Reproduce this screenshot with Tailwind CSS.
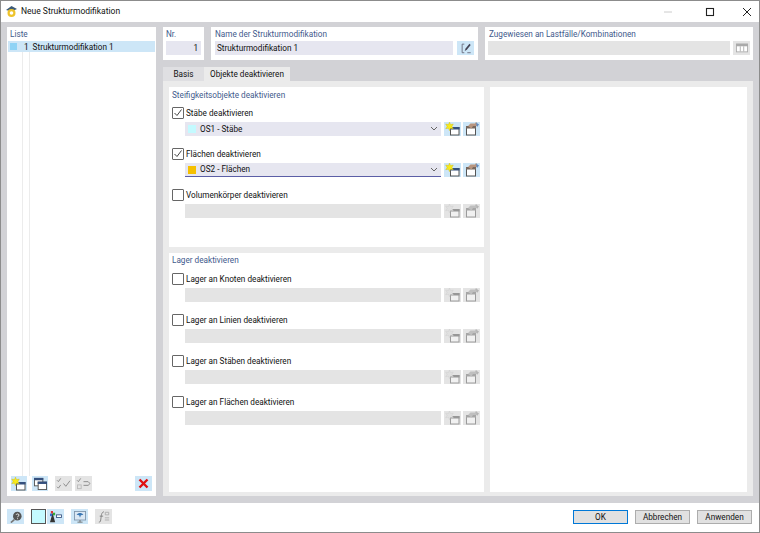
<!DOCTYPE html>
<html lang="de">
<head>
  <meta charset="UTF-8" />
  <title>Neue Strukturmodifikation</title>
  <script src="https://cdn.jsdelivr.net/npm/@tailwindcss/browser@4"></script>
</head>
<body class="m-0 overflow-hidden">
  <svg width="0" height="0" class="absolute">
    <defs>
      <symbol id="i-new" viewBox="0 0 16 14">
        <rect x="5.500" y="5.500" width="8.500" height="7.500" fill="#fff" stroke="#555"/>
        <rect x="5" y="5" width="9.500" height="2.500" fill="#34507e"/>
        <path d="M4.500 0l1 2.600 2.800-.6-1.400 2.400 1.400 2.300-2.800-.5-1 2.600-1-2.600-2.800.5 1.400-2.300L.7 2l2.800.6z" fill="#f7ea1c" stroke="#c9b81a" stroke-width=".4"/>
      </symbol>
      <symbol id="i-copy" viewBox="0 0 16 14">
        <rect x="2.500" y="4.500" width="9" height="8.500" fill="#fff" stroke="#555"/>
        <rect x="2" y="4" width="10" height="2.500" fill="#77685e"/>
        <path d="M4 4l2.500-2.500H11L12 0l1 1 .5 3H9L7.500 6.500z" fill="#b8957f"/>
        <path d="M12 .5l3 2-2 2.500z" fill="#5e8cc4"/>
      </symbol>
      <symbol id="i-windows" viewBox="0 0 16 14">
        <rect x="1.500" y="1.500" width="9" height="8" fill="#fff" stroke="#555"/>
        <rect x="1" y="1" width="10" height="2.500" fill="#34507e"/>
        <rect x="5.500" y="5.500" width="9" height="8" fill="#fff" stroke="#555"/>
        <rect x="5" y="5" width="10" height="2.500" fill="#34507e"/>
      </symbol>
      <symbol id="i-check" viewBox="0 0 16 14">
        <path d="M1 3.500l1.500 1.500 2.500-3.500M1 10.500L2.500 12 5 8.500M8 7l2.500 3L15 4" fill="none" stroke="#888"/>
      </symbol>
      <symbol id="i-uncheck" viewBox="0 0 16 14">
        <rect x="1.500" y="8.500" width="4" height="4" fill="none" stroke="#bbb"/>
        <path d="M1 3.500l1.500 1.500 2.500-3.500M8 5h5l2 2-2 2H8" fill="none" stroke="#888"/>
      </symbol>
      <symbol id="i-search" viewBox="0 0 16 14">
        <circle cx="9.500" cy="6" r="5" fill="#555"/>
        <path d="M6 10l-4 3.500" stroke="#777" stroke-width="2"/>
        <path d="M8 4.500c.5-1.500 3.500-1.500 3.500.3 0 1.200-1.700 1.200-1.700 2.500M9.800 8.500v1" stroke="#fff" fill="none"/>
      </symbol>
      <symbol id="i-tree" viewBox="0 0 16 14">
        <path d="M4 2l3 11H1z" fill="#333"/>
        <rect x="2" y="0" width="2.500" height="3" fill="#d33"/>
        <rect x="4.500" y="2" width="2.500" height="3" fill="#3a3"/>
        <rect x="1" y="3" width="2.500" height="3" fill="#36c"/>
        <rect x="8.500" y="4.500" width="6" height="3" fill="#fff" stroke="#34507e"/>
      </symbol>
      <symbol id="i-monitor" viewBox="0 0 16 14">
        <rect x="1.500" y=".5" width="13" height="10" fill="#dbe8f4" stroke="#7d93aa"/>
        <path d="M5 13h6M8 10.500V13" stroke="#666"/>
        <path d="M4 4.500c2-3 6-3 8 0l-3 .5-1 3-1-3z" fill="#3b78b5"/>
      </symbol>
      <symbol id="i-formula" viewBox="0 0 16 14">
        <path d="M2 13c2 0 2-1 2.500-5s1-7 3.500-7" fill="none" stroke="#777"/>
        <path d="M3 6h4" stroke="#777"/>
        <path d="M9.500 1.500h4v3h-4zM9 8h5M9 10.500h5" fill="none" stroke="#aaa"/>
      </symbol>
      <symbol id="i-edit" viewBox="0 0 16 14">
        <path d="M6 2.500H3.500v10H6" fill="none" stroke="#667"/>
        <path d="M6.500 10.500l1-3L12 2l1.500 1.500-4.500 5.500z" fill="#445"/>
        <path d="M9.500 12.500h4" stroke="#667"/>
      </symbol>
      <symbol id="i-table" viewBox="0 0 16 14">
        <rect x="1.500" y="2.500" width="13" height="9" fill="#fff" stroke="#aaa"/>
        <rect x="1" y="2" width="14" height="3" fill="#aaa"/>
        <path d="M6 5v6M10 5v6" stroke="#aaa"/>
      </symbol>
    </defs>
  </svg>

  <div class="w-[760px] h-[533px] flex flex-col border border-[#8c8c8c] bg-[#d2d2d6] text-[8.2px] leading-none text-[#111] font-[450] font-['Roboto',sans-serif]">
    <!-- title bar -->
    <div class="h-[21px] shrink-0 bg-white flex items-center pl-[4px]">
      <svg width="13" height="13" viewBox="0 0 13 13">
        <path d="M1 5l5.500-4L12 4 6.500 6.500z" fill="#3c5a78"/>
        <circle cx="6.500" cy="8" r="4" fill="#eec32b"/>
        <circle cx="6.500" cy="8" r="1.800" fill="#fff"/>
      </svg>
      <span class="ml-[3px] text-[8.500px]">Neue Strukturmodifikation</span>
      <div class="ml-auto flex items-center">
        <svg width="10" height="10" viewBox="0 0 10 10" class="mr-[32px]"><path d="M1 5h8" stroke="#ccc"/></svg>
        <svg width="10" height="10" viewBox="0 0 10 10" class="mr-[27px]"><rect x="1.500" y="1.500" width="7" height="7" fill="none" stroke="#222" stroke-width="1.100"/></svg>
        <svg width="10" height="10" viewBox="0 0 10 10" class="mr-[7px]"><path d="M1 1l8 8M9 1l-8 8" stroke="#222"/></svg>
      </div>
    </div>

    <div class="flex-1 flex gap-[7px] px-[6px] pt-[5px] pb-[7px] min-h-0">
      <!-- list -->
      <div class="w-[149px] bg-white flex flex-col">
        <div class="h-[14px] flex items-center pl-[3px] text-[#3f5a8c]">Liste</div>
        <div class="h-[11px] mx-[1px] bg-[#cde6f7] flex items-center">
          <span class="ml-[2px] w-[7px] h-[7px] bg-[#8fd3f5]"></span>
          <span class="ml-[7px] pt-[1px]">1</span>
          <span class="ml-[4px] pt-[1px]">Strukturmodifikation 1</span>
        </div>
        <div class="flex-1 flex pl-[15px]">
          <div class="w-[8px] border-x border-[#ececec]"></div>
        </div>
        <div class="h-[20px] flex items-start pl-[4px] pr-[4px] gap-[5px]">
          <button class="w-[16px] h-[15px] bg-[#cde6f7] flex items-center justify-center"><svg width="16" height="14"><use href="#i-new"/></svg></button>
          <button class="w-[16px] h-[15px] bg-[#cde6f7] flex items-center justify-center"><svg width="15" height="13"><use href="#i-windows"/></svg></button>
          <button class="ml-[2px] w-[17px] h-[15px] bg-[#e4e4e4] flex items-center justify-center"><svg width="15" height="13"><use href="#i-check"/></svg></button>
          <button class="-ml-[2px] w-[17px] h-[15px] bg-[#e4e4e4] flex items-center justify-center"><svg width="15" height="13"><use href="#i-uncheck"/></svg></button>
          <button class="ml-auto w-[17px] h-[15px] bg-[#cde6f7] flex items-center justify-center">
            <svg width="11" height="11" viewBox="0 0 11 11"><path d="M1.500 1.500l8 8M9.500 1.500l-8 8" stroke="#e01010" stroke-width="2.400"/></svg>
          </button>
        </div>
      </div>

      <!-- right side -->
      <div class="flex-1 flex flex-col min-w-0">
        <div class="h-[33px] flex gap-[7px] shrink-0">
          <div class="w-[41px] bg-white px-[3px] flex flex-col">
            <div class="h-[14px] flex items-center text-[#3f5a8c]">Nr.</div>
            <div class="h-[14px] bg-[#e6e6f0] flex items-center justify-end pr-[3px]">1</div>
          </div>
          <div class="w-[267px] bg-white px-[4px] flex flex-col">
            <div class="h-[14px] flex items-center text-[#3f5a8c]">Name der Strukturmodifikation</div>
            <div class="flex gap-[4px]">
              <div class="flex-1 h-[14px] bg-[#e6e6f0] flex items-center pl-[2px]">Strukturmodifikation 1</div>
              <button class="w-[17px] h-[14px] bg-[#cde6f7] flex items-center justify-center"><svg width="14" height="12"><use href="#i-edit"/></svg></button>
            </div>
          </div>
          <div class="w-[268px] bg-white px-[3px] flex flex-col">
            <div class="h-[14px] flex items-center pl-[1px] text-[#3f5a8c]">Zugewiesen an Lastfälle/Kombinationen</div>
            <div class="flex gap-[3px]">
              <div class="flex-1 h-[14px] bg-[#e4e4e4]"></div>
              <button class="w-[17px] h-[14px] bg-[#e4e4e4] flex items-center justify-center"><svg width="14" height="12"><use href="#i-table"/></svg></button>
            </div>
          </div>
        </div>

        <!-- tabs -->
        <div class="mt-[7px] h-[14px] shrink-0 flex">
          <div class="w-[41px] bg-[#dfdfe2] flex items-center justify-center">Basis</div>
          <div class="w-[86px] bg-[#ebebeb] flex items-center justify-center">Objekte deaktivieren</div>
        </div>

        <div class="flex-1 min-h-0 bg-[#ebebeb] p-[6px] pb-[4px] flex gap-[6px]">
          <div class="w-[315px] flex flex-col gap-[6px]">
            <div class="h-[160px] bg-white px-[3px]">
              <div class="h-[12px] flex items-end text-[#3f5a8c]">Steifigkeitsobjekte deaktivieren</div>
              <div class="mt-[7px] flex flex-col gap-[11px]">
                <div>
                  <div class="h-[14px] flex items-center gap-[2px]">
                    <span class="w-[12px] h-[12px] border border-[#666] rounded-[1px] flex items-center justify-center"><svg width="10" height="10" viewBox="0 0 10 10"><path d="M1.500 5l2.500 2.500L8.500 1.500" fill="none" stroke="#444"/></svg></span>
                    <span>Stäbe deaktivieren</span>
                  </div>
                  <div class="mt-[2px] flex pl-[13px]">
                    <div class="w-[256px] h-[14px] bg-[#e6e6f0] flex items-center pl-[3px]">
                      <span class="w-[8px] h-[8px] bg-[#c4faff]"></span><span class="ml-[4px]">OS1 - Stäbe</span>
                      <svg class="ml-auto mr-[3px]" width="8" height="6" viewBox="0 0 8 6"><path d="M1 1l3 3 3-3" fill="none" stroke="#666"/></svg>
                    </div>
                    <button class="ml-[3px] w-[17px] h-[14px] bg-[#cde6f7] flex items-center justify-center"><svg width="16" height="14"><use href="#i-new"/></svg></button>
                    <button class="ml-[2px] w-[17px] h-[14px] bg-[#cde6f7] flex items-center justify-center"><svg width="16" height="14"><use href="#i-copy"/></svg></button>
                  </div>
                </div>
                <div>
                  <div class="h-[14px] flex items-center gap-[2px]">
                    <span class="w-[12px] h-[12px] border border-[#666] rounded-[1px] flex items-center justify-center"><svg width="10" height="10" viewBox="0 0 10 10"><path d="M1.500 5l2.500 2.500L8.500 1.500" fill="none" stroke="#444"/></svg></span>
                    <span>Flächen deaktivieren</span>
                  </div>
                  <div class="mt-[2px] flex pl-[13px]">
                    <div class="w-[256px] h-[14px] bg-[#e6e6f0] border-b border-[#5b5ea6] flex items-center pl-[3px]">
                      <span class="w-[8px] h-[8px] bg-[#f5c000]"></span><span class="ml-[4px]">OS2 - Flächen</span>
                      <svg class="ml-auto mr-[3px]" width="8" height="6" viewBox="0 0 8 6"><path d="M1 1l3 3 3-3" fill="none" stroke="#666"/></svg>
                    </div>
                    <button class="ml-[3px] w-[17px] h-[14px] bg-[#cde6f7] flex items-center justify-center"><svg width="16" height="14"><use href="#i-new"/></svg></button>
                    <button class="ml-[2px] w-[17px] h-[14px] bg-[#cde6f7] flex items-center justify-center"><svg width="16" height="14"><use href="#i-copy"/></svg></button>
                  </div>
                </div>
                <div>
                  <div class="h-[14px] flex items-center gap-[2px]">
                    <span class="w-[12px] h-[12px] border border-[#666] rounded-[1px]"></span>
                    <span>Volumenkörper deaktivieren</span>
                  </div>
                  <div class="mt-[2px] flex pl-[13px]">
                    <div class="w-[256px] h-[14px] bg-[#e4e4e4]"></div>
                    <button class="ml-[3px] w-[17px] h-[14px] bg-[#e4e4e4] flex items-center justify-center"><svg width="16" height="14" class="grayscale opacity-50"><use href="#i-new"/></svg></button>
                    <button class="ml-[2px] w-[17px] h-[14px] bg-[#e4e4e4] flex items-center justify-center"><svg width="16" height="14" class="grayscale opacity-50"><use href="#i-copy"/></svg></button>
                  </div>
                </div>
              </div>
            </div>
            <div class="flex-1 bg-white px-[3px]">
              <div class="h-[14px] flex items-center text-[#3f5a8c]">Lager deaktivieren</div>
              <div class="mt-[5px] flex flex-col gap-[11px]">
                <div>
                  <div class="h-[14px] flex items-center gap-[2px]">
                    <span class="w-[12px] h-[12px] border border-[#666] rounded-[1px]"></span>
                    <span>Lager an Knoten deaktivieren</span>
                  </div>
                  <div class="mt-[2px] flex pl-[13px]">
                    <div class="w-[256px] h-[14px] bg-[#e4e4e4]"></div>
                    <button class="ml-[3px] w-[17px] h-[14px] bg-[#e4e4e4] flex items-center justify-center"><svg width="16" height="14" class="grayscale opacity-50"><use href="#i-new"/></svg></button>
                    <button class="ml-[2px] w-[17px] h-[14px] bg-[#e4e4e4] flex items-center justify-center"><svg width="16" height="14" class="grayscale opacity-50"><use href="#i-copy"/></svg></button>
                  </div>
                </div>
                <div>
                  <div class="h-[14px] flex items-center gap-[2px]">
                    <span class="w-[12px] h-[12px] border border-[#666] rounded-[1px]"></span>
                    <span>Lager an Linien deaktivieren</span>
                  </div>
                  <div class="mt-[2px] flex pl-[13px]">
                    <div class="w-[256px] h-[14px] bg-[#e4e4e4]"></div>
                    <button class="ml-[3px] w-[17px] h-[14px] bg-[#e4e4e4] flex items-center justify-center"><svg width="16" height="14" class="grayscale opacity-50"><use href="#i-new"/></svg></button>
                    <button class="ml-[2px] w-[17px] h-[14px] bg-[#e4e4e4] flex items-center justify-center"><svg width="16" height="14" class="grayscale opacity-50"><use href="#i-copy"/></svg></button>
                  </div>
                </div>
                <div>
                  <div class="h-[14px] flex items-center gap-[2px]">
                    <span class="w-[12px] h-[12px] border border-[#666] rounded-[1px]"></span>
                    <span>Lager an Stäben deaktivieren</span>
                  </div>
                  <div class="mt-[2px] flex pl-[13px]">
                    <div class="w-[256px] h-[14px] bg-[#e4e4e4]"></div>
                    <button class="ml-[3px] w-[17px] h-[14px] bg-[#e4e4e4] flex items-center justify-center"><svg width="16" height="14" class="grayscale opacity-50"><use href="#i-new"/></svg></button>
                    <button class="ml-[2px] w-[17px] h-[14px] bg-[#e4e4e4] flex items-center justify-center"><svg width="16" height="14" class="grayscale opacity-50"><use href="#i-copy"/></svg></button>
                  </div>
                </div>
                <div>
                  <div class="h-[14px] flex items-center gap-[2px]">
                    <span class="w-[12px] h-[12px] border border-[#666] rounded-[1px]"></span>
                    <span>Lager an Flächen deaktivieren</span>
                  </div>
                  <div class="mt-[2px] flex pl-[13px]">
                    <div class="w-[256px] h-[14px] bg-[#e4e4e4]"></div>
                    <button class="ml-[3px] w-[17px] h-[14px] bg-[#e4e4e4] flex items-center justify-center"><svg width="16" height="14" class="grayscale opacity-50"><use href="#i-new"/></svg></button>
                    <button class="ml-[2px] w-[17px] h-[14px] bg-[#e4e4e4] flex items-center justify-center"><svg width="16" height="14" class="grayscale opacity-50"><use href="#i-copy"/></svg></button>
                  </div>
                </div>
              </div>
            </div>
          </div>
          <div class="flex-1 bg-white"></div>
        </div>
      </div>
    </div>

    <!-- bottom bar -->
    <div class="h-[29px] shrink-0 bg-white flex items-start pt-[6px] pl-[6px] pr-[7px]">
      <button class="w-[17px] h-[15px] bg-[#cde6f7] flex items-center justify-center"><svg width="14" height="12"><use href="#i-search"/></svg></button>
      <span class="ml-[7px] w-[15px] h-[15px] bg-[#c4faff] border border-[#555]"></span>
      <button class="ml-[1px] w-[17px] h-[15px] bg-[#cde6f7] flex items-center justify-center"><svg width="14" height="12"><use href="#i-tree"/></svg></button>
      <button class="ml-[7px] w-[17px] h-[15px] bg-[#cde6f7] flex items-center justify-center"><svg width="14" height="12"><use href="#i-monitor"/></svg></button>
      <button class="ml-[7px] w-[17px] h-[15px] bg-[#e4e4e4] flex items-center justify-center"><svg width="14" height="12"><use href="#i-formula"/></svg></button>
      <div class="ml-auto flex gap-[7px] pt-[1px]">
        <button class="w-[55px] h-[14px] bg-[#e1e1e1] border-[1.5px] border-[#0078d7] leading-none">OK</button>
        <button class="w-[55px] h-[14px] bg-[#e1e1e1] border border-[#adadad] leading-none">Abbrechen</button>
        <button class="w-[55px] h-[14px] bg-[#e1e1e1] border border-[#adadad] leading-none">Anwenden</button>
      </div>
    </div>
  </div>
</body>
</html>
